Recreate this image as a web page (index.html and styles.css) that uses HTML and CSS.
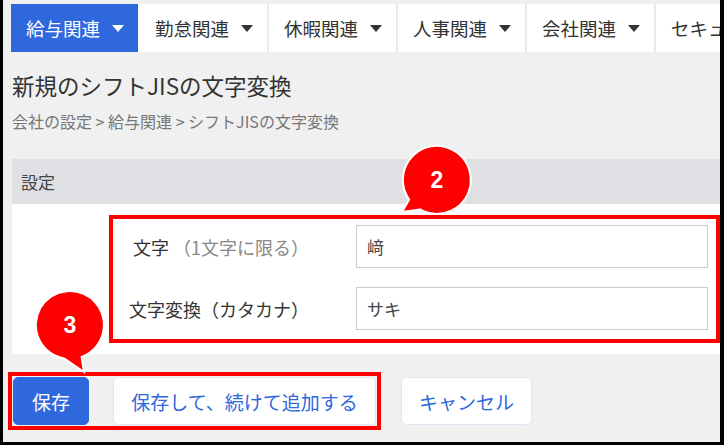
FILE: index.html
```html
<!DOCTYPE html>
<html lang="ja">
<head>
  <meta charset="UTF-8">
  <title>新規のシフトJISの文字変換</title>
  <link rel="stylesheet" href="styles.css">
</head>
<body>
  <div class="frame">
    <nav class="menu">
      <div class="menu-item active">給与関連<span class="caret"></span></div>
      <div class="menu-item">勤怠関連<span class="caret"></span></div>
      <div class="menu-item">休暇関連<span class="caret"></span></div>
      <div class="menu-item">人事関連<span class="caret"></span></div>
      <div class="menu-item">会社関連<span class="caret"></span></div>
      <div class="menu-item">セキュリティ<span class="caret"></span></div>
    </nav>

    <div class="content">
      <h1 class="title">新規のシフトJISの文字変換</h1>
      <div class="crumbs">会社の設定 &gt; 給与関連 &gt; シフトJISの文字変換</div>

      <div class="panel">
        <div class="panel-head">設定</div>
        <div class="panel-body">
          <div class="mark mark-fields">
            <div class="row">
              <label class="row-label" for="char">文字 <span class="hint">（1文字に限る）</span></label>
              <input class="field" id="char" type="text" value="﨑">
            </div>
            <div class="row">
              <label class="row-label" for="kana">文字変換（カタカナ）</label>
              <input class="field" id="kana" type="text" value="サキ">
            </div>
          </div>
        </div>
      </div>

      <div class="actions">
        <div class="mark mark-buttons">
          <button class="btn btn-primary">保存</button>
          <button class="btn btn-plain">保存して、続けて追加する</button>
        </div>
        <button class="btn btn-plain btn-cancel">キャンセル</button>
      </div>
    </div>

    <!-- callouts -->
    <svg class="bubble bubble-2" width="82" height="80" viewBox="0 0 82 80">
      <path d="M 23 69.4 L 5 72 L 12.1 59.5 A 34 34 0 1 1 23 69.4 Z" fill="#ff0000" stroke="#fff" stroke-width="2"/>
      <text x="40" y="48" text-anchor="middle">2</text>
    </svg>
    <svg class="bubble bubble-3" width="80" height="92" viewBox="0 0 80 92">
      <path d="M 51.6 71.9 L 54 87 L 34.1 73.5 A 34 34 0 1 1 51.6 71.9 Z" fill="#ff0000" stroke="#fff" stroke-width="2"/>
      <text x="40" y="48" text-anchor="middle">3</text>
    </svg>
  </div>
</body>
</html>
```

FILE: styles.css
```css
* {
  box-sizing: border-box;
}

body {
  margin: 0;
  background: #fff;
  font-family: "Noto Sans CJK JP", "Noto Sans", sans-serif;
  color: #333;
}

.frame {
  position: relative;
  width: 724px;
  height: 445px;
  overflow: hidden;
  background: #f0f0f0;
  border-left: 3px solid #000;
  border-right: 4px solid #000;
  border-bottom: 3px solid #000;
  padding-top: 4px;
}

.menu {
  display: flex;
  margin-left: 8px;
  height: 48px;
  background: #fff;
  white-space: nowrap;
}

.menu-item {
  display: flex;
  align-items: center;
  flex: 0 0 auto;
  width: 129px;
  padding-left: 15px;
  font-size: 18.5px;
  color: #333;
  border-right: 2px solid #ebebeb;
}

.menu-item.active {
  width: 127px;
  background: #2f67dc;
  color: #fff;
  border-right: none;
  margin-right: 2px;
}

.caret {
  display: inline-block;
  margin-left: 12px;
  border-left: 6px solid transparent;
  border-right: 6px solid transparent;
  border-top: 7px solid #333;
}

.menu-item.active .caret {
  border-top-color: #fff;
}

.content {
  padding-left: 9px;
}

.title {
  margin: 17px 0 0;
  font-size: 22.5px;
  font-weight: normal;
  line-height: 32px;
  color: #333;
}

.crumbs {
  margin-top: 9px;
  font-size: 16px;
  line-height: 22px;
  color: #777;
}

.panel {
  margin-top: 27px;
  background: #fff;
}

.panel-head {
  height: 45px;
  padding-left: 9px;
  background: #dfe0e4;
  font-size: 17px;
  line-height: 45px;
  color: #444;
}

.panel-body {
  padding: 11px 0 11px 97px;
}

.mark {
  border: 4px solid #ff0000;
}

.mark-fields {
  padding: 6px 5px 9px 0;
  display: flex;
  flex-direction: column;
  gap: 19px;
}

.row {
  display: flex;
  align-items: center;
}

.row-label {
  width: 243px;
  padding-right: 47px;
  text-align: right;
  font-size: 18px;
  color: #333;
}

.hint {
  color: #888;
}

.field {
  width: 352px;
  height: 43px;
  padding: 0 10px;
  border: 1px solid #c5ccd4;
  border-radius: 0;
  background: #fff;
  font-family: inherit;
  font-size: 17px;
  color: #444;
}

.actions {
  display: flex;
  align-items: center;
  gap: 20px;
  margin-top: 18px;
  margin-left: -4px;
}

.mark-buttons {
  display: flex;
  gap: 24px;
  padding: 1px;
}

.btn {
  height: 48px;
  border: 1px solid #dfe6f3;
  border-radius: 5px;
  font-family: inherit;
  font-size: 19px;
  padding: 0 10px;
}

.btn-primary {
  width: 76px;
  background: #2f67dc;
  border-color: #2f67dc;
  color: #fff;
}

.btn-plain {
  background: #fff;
  color: #2f67dc;
}

.mark-buttons .btn-plain {
  width: 263px;
}

.btn-cancel {
  width: 131px;
}

.bubble {
  position: absolute;
}

.bubble text {
  fill: #fff;
  font-family: "Liberation Sans", Arial, sans-serif;
  font-weight: bold;
  font-size: 23px;
}

.bubble-2 {
  left: 394px;
  top: 140px;
}

.bubble-3 {
  left: 27px;
  top: 285px;
}
```
